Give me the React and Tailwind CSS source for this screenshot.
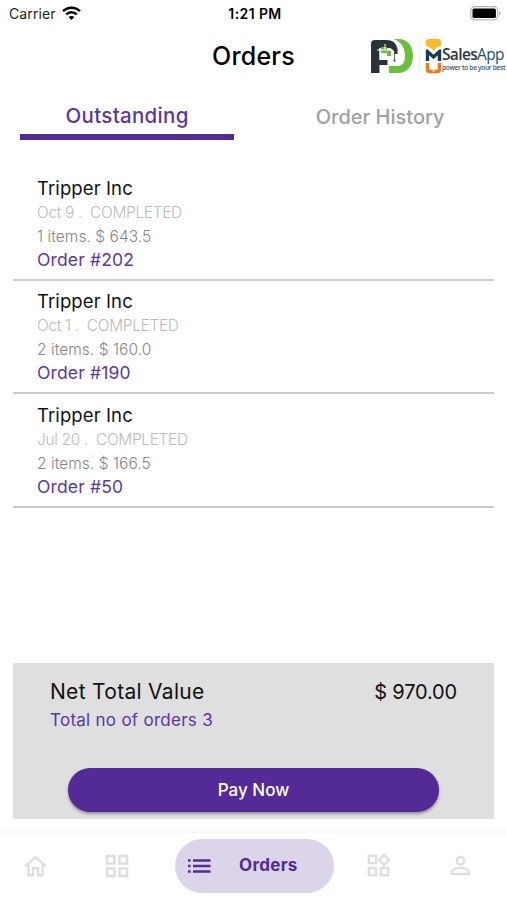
import { useState } from 'react';
import { MdOutlineGridView, MdOutlineWidgets, MdPersonOutline } from 'react-icons/md';

const orders = [
  { id: 202, customer: 'Tripper Inc', date: 'Oct 9', status: 'COMPLETED', items: 1, total: '643.5' },
  { id: 190, customer: 'Tripper Inc', date: 'Oct 1', status: 'COMPLETED', items: 2, total: '160.0' },
  { id: 50, customer: 'Tripper Inc', date: 'Jul 20', status: 'COMPLETED', items: 2, total: '166.5' },
];

const StatusBar = () => (
  <div className="grid h-7 grid-cols-[1fr_auto_1fr] items-center pr-[6px] pl-[9px] text-[14px]">
    <div className="flex items-center gap-[6px] text-[#222]">
      <span className="-mt-[2px] tracking-[0.1px]">Carrier</span>
      <svg className="-mt-[2px] h-[15px] w-[19px]" viewBox="0 0 19 15" fill="none" stroke="#000" strokeWidth="2.4">
        <path d="M1 5.2C5.8.5 13.2.5 18 5.2" />
        <path d="M4.2 8.4c3-2.9 7.6-2.9 10.6 0" />
        <path d="M6.6 11.1c1.7-1.6 4.1-1.6 5.8 0l-2.9 2.9z" fill="#000" stroke="none" />
      </svg>
    </div>
    <span className="-mt-px text-center font-semibold tracking-[0.4px] text-black">1:21 PM</span>
    <svg className="-mt-[2px] h-[15px] w-[31px] justify-self-end" viewBox="0 0 31 15">
      <rect x="0.7" y="0.7" width="27" height="13.2" rx="4" fill="#fff" stroke="#b5b5b5" strokeWidth="1.2" />
      <rect x="2.5" y="2.5" width="23.4" height="9.6" rx="1.6" fill="#000" />
      <path d="M29 5v4.6q1.6-.7 1.6-2.3T29 5z" fill="#aaa" />
    </svg>
  </div>
);

const PDLogo = () => (
  <svg className="h-9 w-[43px]" viewBox="0 0 43 36">
    <path d="M23 1h4c10 0 15 7 15 17s-6 17-15 17h-9v-7h8c6 0 8-4 8-10 0-8-3-13-11-17z" fill="#6bbf3a" />
    <path d="M0 6q0-4 4-4h11c7 0 10 3 11.5 9v5H24c-1-3-2-5-5-6H8.5v12h8V27h-8v8H0z" fill="#2a3338" />
    <path d="M8.5 10h8v3h6v5q-3 3.5-7 3.5h-7z" fill="#fff" />
    <path d="M10 9h6v4h4v5h-4v-3h-6z" fill="#6bbf3a" />
    <path d="M6 12h11M14 6v5" stroke="#fff" strokeWidth="1" />
    <path d="M23.5 14v9" stroke="#59656a" strokeWidth="1" />
    <path d="M23.5 19.5l-1.5 4h3z" fill="#59656a" />
  </svg>
);

const SalesAppLogo = () => (
  <div className="flex items-center">
    <svg className="h-[36px] w-[17px]" viewBox="0 0 17 36">
      <path d="M4 1h9q3 0 3 3v4l-3.5 1-4 3.5L4.5 9 1 8V4q0-3 3-3z" fill="#fbb928" />
      <path d="M0.8 23V11.5h2l5.7 5.2 5.7-5.2h2V23h-3.4v-5.8l-4.3 4-4.3-4V23z" fill="#173b57" />
      <path d="M2.5 25v6q0 2.5 2.5 2.5h7q2.5 0 2.5-2.5v-6" fill="none" stroke="#ef7623" strokeWidth="3.4" />
      <circle cx="8.5" cy="33" r="0.9" fill="#fff" />
    </svg>
    <div className="flex w-[62px] flex-col pt-[5px] whitespace-nowrap">
      <span className="font-['Open_Sans',sans-serif] text-[15.5px] leading-[18px] font-semibold tracking-[-0.65px] text-[#2b3440]">
        Sales<span className="font-medium text-[#24506c]">App</span>
      </span>
      <span className="pt-px font-['Open_Sans',sans-serif] text-[6.5px] leading-[8px] font-semibold tracking-[-0.27px] text-[#44546a]">
        power to be your best
      </span>
    </div>
  </div>
);

const OrderRow = ({ order }) => (
  <li className="flex h-[113.6px] flex-col border-b-2 border-[#cbcbcb] pt-[7.5px] pl-6">
    <span className="text-[18.5px] leading-[26px] tracking-[0.1px] text-[#111]">{order.customer}</span>
    <span className="text-[15.5px] leading-6 font-light tracking-[-0.35px] whitespace-pre text-[#bababa]">
      {order.date} .{'  '}{order.status}
    </span>
    <span className="text-[15.5px] leading-[23px] font-light tracking-[0.05px] text-[#858585]">
      {order.items} items. $ {order.total}
    </span>
    <span className="text-[17.5px] leading-6 tracking-[0.15px] text-[#5b36a5]">Order #{order.id}</span>
  </li>
);

const App = () => {
  const [tab, setTab] = useState('outstanding');

  return (
    <div className="flex h-[900px] w-[507px] flex-col overflow-hidden bg-white font-['Inter',sans-serif]">
      <StatusBar />

      <header className="grid h-14 grid-cols-[1fr_auto_1fr] items-center">
        <span />
        <h1 className="pt-px text-[25px] font-medium tracking-[0.2px] text-black">Orders</h1>
        <div className="flex items-center justify-self-end pr-[3px]">
          <PDLogo />
          <div className="mx-[5px] h-9 w-px bg-[#f2f2f2]" />
          <SalesAppLogo />
        </div>
      </header>

      <nav className="flex px-5 pt-[14px]">
        <button
          onClick={() => setTab('outstanding')}
          className={`h-[42px] w-[214.5px] border-b-[6px] pt-px text-[20.5px] font-medium tracking-[0.3px] ${tab === 'outstanding' ? 'border-[#532a96] text-[#5b36a5]' : 'border-transparent text-[#a0a0a0]'}`}
        >
          Outstanding
        </button>
        <button
          onClick={() => setTab('history')}
          className={`ml-[39px] h-[42px] w-[214px] border-b-[6px] pt-px text-[20px] font-medium ${tab === 'history' ? 'border-[#532a96] text-[#5b36a5]' : 'border-transparent text-[#a0a0a0]'}`}
        >
          Order History
        </button>
      </nav>

      <ul className="mx-[13px] mt-[27px] flex flex-1 flex-col">
        {orders.map((order) => (
          <OrderRow key={order.id} order={order} />
        ))}
      </ul>

      <section className="mx-[13px] mb-3 flex h-[156px] flex-col bg-[#dfdfdf] px-[37px] pt-[14px]">
        <div className="flex items-center justify-between leading-7 text-[#111]">
          <span className="pt-px text-[21px] tracking-[0.3px]">Net Total Value</span>
          <span className="text-[20px] tracking-[-0.15px]">$ 970.00</span>
        </div>
        <span className="text-[17px] leading-7 tracking-[0.27px] text-[#5b36a5]">Total no of orders 3</span>
        <button className="mx-[18px] mt-[34px] h-11 rounded-full bg-[#532a96] pt-px text-[17px] font-medium text-white shadow-[0_2px_3px_rgba(0,0,0,0.35)]">
          Pay Now
        </button>
      </section>

      <footer className="flex h-[69px] items-center border-t-2 border-[#f7f7f7] pb-[2px] text-[#dedede]">
        <svg className="ml-6 h-[22px] w-6" viewBox="0 0 24 22" fill="none" stroke="currentColor" strokeWidth="2.4">
          <path d="M4.5 9.500v10.800H9v-7h5v7h4.500V9.500M1 11.500L11.500 2 22 11.500" />
        </svg>
        <MdOutlineGridView className="ml-[54px] size-[30px]" />
        <div className="ml-[43px] flex h-[54px] w-[159px] items-center rounded-full bg-[#dcd5e9] text-[#532a96]">
          <svg className="ml-[13px] h-[14px] w-[23px]" viewBox="0 0 23 14" stroke="currentColor" strokeWidth="2.6">
            <path d="M0 1.500h2.600M0 7h2.600M0 12.500h2.600M5 1.500h17.500M5 7h17.500M5 12.500h17.500" />
          </svg>
          <span className="ml-[28px] pt-px text-[17px] font-bold tracking-[0.3px]">Orders</span>
        </div>
        <MdOutlineWidgets className="ml-[30px] size-[29px]" />
        <MdPersonOutline className="ml-[53px] size-[29px]" />
      </footer>
    </div>
  );
};

export default App;
